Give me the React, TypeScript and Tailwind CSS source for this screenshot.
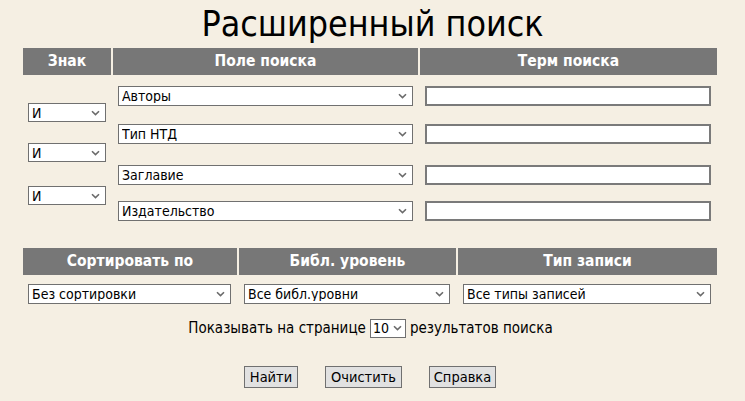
import { ReactNode } from "react";

const font = { fontFamily: '"DejaVu Sans Condensed", "DejaVu Sans", Tahoma, sans-serif' };

function Chevron() {
  return (
    <svg
      className="pointer-events-none absolute right-[6px] top-1/2 -translate-y-1/2"
      width="9"
      height="6"
      viewBox="0 0 9 6"
    >
      <path d="M1 1.2 L4.5 4.6 L8 1.2" fill="none" stroke="#6b6b6b" strokeWidth="1.6" />
    </svg>
  );
}

function Select({ value, className }: { value: string; className: string }) {
  return (
    <div className={"relative " + className}>
      <select
        defaultValue={value}
        className="block h-full w-full appearance-none border border-[#707070] bg-white pl-[3px] pr-4 text-[14px] leading-none text-black outline-none"
      >
        <option>{value}</option>
      </select>
      <Chevron />
    </div>
  );
}

function Th({ children }: { children: ReactNode }) {
  return (
    <div className="flex h-[27px] items-center justify-center bg-[#777777] text-[15.5px] font-bold text-white">
      {children}
    </div>
  );
}

export default function App() {
  return (
    <div className="h-[401px] w-[745px] overflow-hidden bg-[#f5efe3] text-black" style={font}>
      {/* Title */}
      <h1 className="h-[48px] pt-[4px] text-center text-[35.5px] leading-[40px]">Расширенный поиск</h1>

      {/* Search fields */}
      <div className="ml-[23px] w-[694px]">
        <div className="grid grid-cols-[88px_305px_297px] gap-x-[2px]">
          <Th>Знак</Th>
          <Th>Поле поиска</Th>
          <Th>Терм поиска</Th>
        </div>
        <div className="grid grid-cols-[88px_305px_297px] gap-x-[2px]">
          <div className="flex flex-col pl-[5px]">
            <Select value="И" className="mt-[28px] h-[19px] w-[78px]" />
            <Select value="И" className="mt-[21px] h-[19px] w-[78px]" />
            <Select value="И" className="mt-[24px] h-[19px] w-[78px]" />
          </div>
          <div className="flex flex-col pl-[5px]">
            <Select value="Авторы" className="mt-[11px] h-[20px] w-[295px]" />
            <Select value="Тип НТД" className="mt-[18px] h-[20px] w-[295px]" />
            <Select value="Заглавие" className="mt-[21px] h-[20px] w-[295px]" />
            <Select value="Издательство" className="mt-[16px] h-[20px] w-[295px]" />
          </div>
          <div className="flex flex-col pl-[5px]">
            <input className="mt-[11px] h-[20px] w-[286px] border-2 border-[#7a7a7a] bg-white outline-none" />
            <input className="mt-[18px] h-[20px] w-[286px] border-2 border-[#7a7a7a] bg-white outline-none" />
            <input className="mt-[21px] h-[20px] w-[286px] border-2 border-[#7a7a7a] bg-white outline-none" />
            <input className="mt-[16px] h-[20px] w-[286px] border-2 border-[#7a7a7a] bg-white outline-none" />
          </div>
        </div>
      </div>

      {/* Sorting / filters */}
      <div className="ml-[23px] mt-[27px] w-[694px]">
        <div className="grid grid-cols-[214px_217px_259px] gap-x-[2px]">
          <Th>Сортировать по</Th>
          <Th>Библ. уровень</Th>
          <Th>Тип записи</Th>
          <div className="pl-[5px] pt-[9px]">
            <Select value="Без сортировки" className="h-[20px] w-[203px]" />
          </div>
          <div className="pl-[5px] pt-[9px]">
            <Select value="Все библ.уровни" className="h-[20px] w-[206px]" />
          </div>
          <div className="pl-[5px] pt-[9px]">
            <Select value="Все типы записей" className="h-[20px] w-[248px]" />
          </div>
        </div>
      </div>

      <div className="mt-[13px] flex items-center justify-center gap-[4px] pr-[4px] text-[15px]">
        <span>Показывать на странице</span>
        <div className="relative h-[19px] w-[36px]">
          <select
            defaultValue="10"
            className="block h-full w-full appearance-none border border-[#707070] bg-white pl-[2px] text-[14px] leading-none outline-none"
          >
            <option>10</option>
          </select>
          <svg
            className="pointer-events-none absolute right-[4px] top-1/2 -translate-y-1/2"
            width="9"
            height="6"
            viewBox="0 0 9 6"
          >
            <path d="M1 1.2 L4.5 4.6 L8 1.2" fill="none" stroke="#6b6b6b" strokeWidth="1.6" />
          </svg>
        </div>
        <span>результатов поиска</span>
      </div>

      <div className="mt-[26px] flex justify-center gap-[27px] pr-[5px] text-[14.5px]">
        <button className="h-[22px] w-[54px] border border-[#707070] bg-[#e1e1e1]">Найти</button>
        <button className="h-[22px] w-[77px] border border-[#707070] bg-[#e1e1e1]">Очистить</button>
        <button className="h-[22px] w-[67px] border border-[#707070] bg-[#e1e1e1]">Справка</button>
      </div>
    </div>
  );
}
